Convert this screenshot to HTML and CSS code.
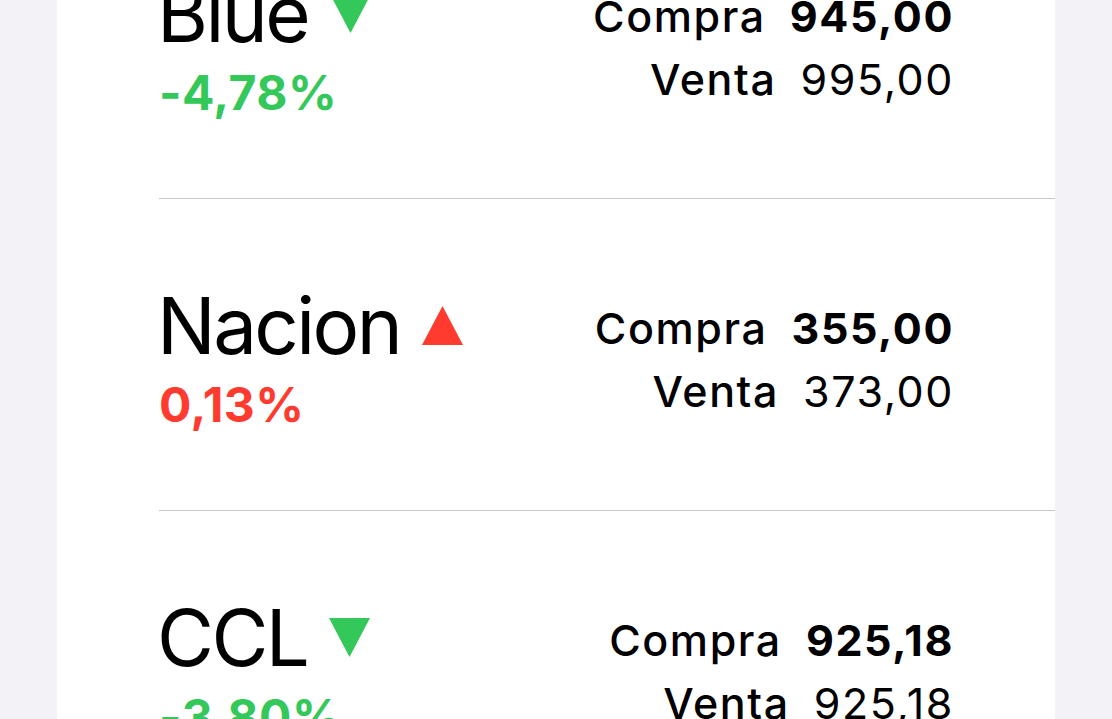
FILE: index.html
```html
<!DOCTYPE html>
<html lang="es">
<head>
<meta charset="utf-8">
<link rel="stylesheet" href="styles.css">
</head>
<body>
<div class="card">
  <div class="row">
    <div class="left">
      <div class="title"><span class="name">Blue</span><svg class="tri" viewBox="0 0 40 40"><polygon points="0,1 40,1 20,39" fill="#34c759"/></svg></div>
      <div class="pct down">-4,78%</div>
    </div>
    <div class="right">
      <div class="line"><span class="lbl">Compra</span><span class="val bold">945,00</span></div>
      <div class="line"><span class="lbl">Venta</span><span class="val">995,00</span></div>
    </div>
  </div>
  <div class="row">
    <div class="left">
      <div class="title"><span class="name">Nacion</span><svg class="tri" viewBox="0 0 40 40"><polygon points="20,1 40,39 0,39" fill="#ff3b30"/></svg></div>
      <div class="pct up">0,13%</div>
    </div>
    <div class="right">
      <div class="line"><span class="lbl">Compra</span><span class="val bold">355,00</span></div>
      <div class="line"><span class="lbl">Venta</span><span class="val">373,00</span></div>
    </div>
  </div>
  <div class="row">
    <div class="left">
      <div class="title"><span class="name">CCL</span><svg class="tri" viewBox="0 0 40 40"><polygon points="0,1 40,1 20,39" fill="#34c759"/></svg></div>
      <div class="pct down">-3,80%</div>
    </div>
    <div class="right">
      <div class="line"><span class="lbl">Compra</span><span class="val bold">925,18</span></div>
      <div class="line"><span class="lbl">Venta</span><span class="val">925,18</span></div>
    </div>
  </div>
</div>
</body>
</html>
```
FILE: styles.css
```css
html, body {
  margin: 0;
  padding: 0;
  background: #f2f2f7;
  height: 719px;
  overflow: hidden;
}
body {
  font-family: Inter, "Noto Sans", sans-serif;
  color: #000;
}
.card {
  margin-left: 57px;
  width: 998px;
  margin-top: -113px;
  background: #fff;
  padding-left: 102px;
  box-sizing: border-box;
}
.row {
  height: 312px;
  box-sizing: border-box;
  border-bottom: 1px solid #c8c7cc;
  display: flex;
  align-items: center;
  justify-content: space-between;
  padding-right: 101px;
  padding-top: 11px;
}
.title {
  font-size: 78px;
  line-height: 80px;
  display: flex;
  align-items: center;
  margin-left: -2px;
}
.name {
  letter-spacing: -2.6px;
}
.tri {
  width: 41px;
  height: 41px;
  margin-left: 22px;
  flex: none;
}
.pct {
  font-size: 48px;
  font-weight: 700;
  line-height: 60px;
  margin-top: 9px;
  letter-spacing: 0.5px;
}
.pct.down { color: #34c759; }
.pct.up { color: #ff3b30; }
.right {
  display: flex;
  flex-direction: column;
  align-items: flex-end;
}
.line {
  font-size: 43px;
  line-height: 63px;
  display: flex;
  gap: 24px;
  letter-spacing: 1.6px;
}
.lbl { font-weight: 500; }
.val { font-weight: 400; }
.val.bold { font-weight: 700; }
```
